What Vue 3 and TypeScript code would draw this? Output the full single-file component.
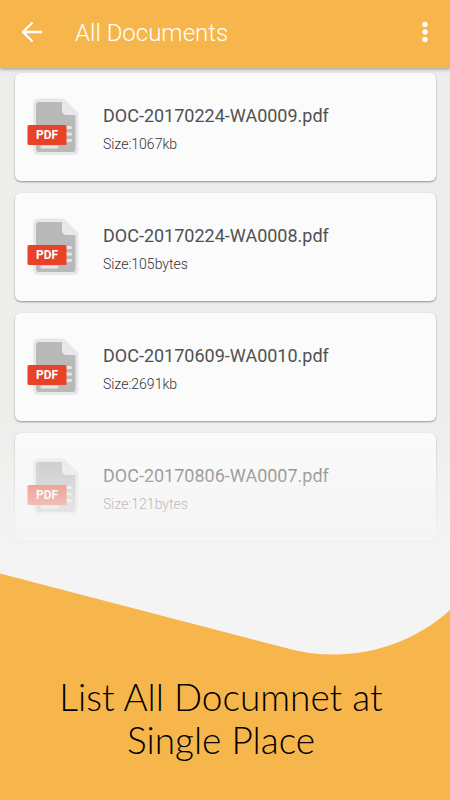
<script setup lang="ts">
interface DocumentItem {
  name: string
  size: string
}

const documents: DocumentItem[] = [
  { name: 'DOC-20170224-WA0009.pdf', size: '1067kb' },
  { name: 'DOC-20170224-WA0008.pdf', size: '105bytes' },
  { name: 'DOC-20170609-WA0010.pdf', size: '2691kb' },
  { name: 'DOC-20170806-WA0007.pdf', size: '121bytes' },
]
</script>

<template>
  <div class="screen">
    <header class="bar">
      <button class="icon-button" type="button" aria-label="Back">
        <svg width="24" height="24" viewBox="0 0 24 24" fill="none" stroke="#fff" stroke-width="2.300">
          <path d="M22 12H3.500M12.500 2.500 3 12l9.500 9.500" />
        </svg>
      </button>
      <h1 class="bar-title">All Documents</h1>
      <button class="icon-button" type="button" aria-label="More options">
        <svg width="24" height="24" viewBox="0 0 24 24" fill="#fff">
          <circle cx="12" cy="4.500" r="2.700" />
          <circle cx="12" cy="12" r="2.700" />
          <circle cx="12" cy="19.500" r="2.700" />
        </svg>
      </button>
    </header>

    <main class="content">
      <ul class="list">
        <li v-for="doc in documents" :key="doc.name" class="card">
          <span class="file">
            <svg width="54" height="60" viewBox="0 0 54 60">
              <path d="M13 1.500H36.500L51.500 16V52Q51.500 58 45.500 58H12.500Q6 58 6 52V8Q6 1.500 12.500 1.500Z" fill="#e8e8e8" />
              <path d="M12 5H35V13Q35 18 40 18H48.500V52Q48.500 55 45.500 55H12Q9 55 9 52V8Q9 5 12 5Z" fill="#b9b9b9" />
              <path d="M37 30.500H43.500M37 37H43.500M37 43.500H43.500M15 50H30" stroke="#e6e6e6" stroke-width="3" stroke-linecap="round" />
              <rect y="28" x="0.500" width="39" height="20" rx="1.500" fill="#e94327" />
            </svg>
            <span class="badge">PDF</span>
          </span>
          <div class="info">
            <h2 class="name">{{ doc.name }}</h2>
            <p class="size">Size:{{ doc.size }}</p>
          </div>
        </li>
      </ul>
      <div class="fade"></div>
    </main>

    <footer class="promo">
      <svg class="wave" viewBox="0 0 450 84" preserveAspectRatio="none" aria-hidden="true">
        <path d="M0 0.500 290 76Q310 81.500 334 81.500C375 81.500 417 67 450 37V84H0Z" fill="#f6b64b" />
      </svg>
      <p class="caption">List All Documnet at<br />Single Place</p>
    </footer>
  </div>
</template>

<style>
body {
  margin: 0;
  background: #f6b64b;
}
</style>

<style scoped>
.screen {
  display: flex;
  flex-direction: column;
  min-height: 100vh;
  background: #f4f4f4;
  font-family: Roboto, "Liberation Sans", sans-serif;
}

.bar {
  position: relative;
  z-index: 1;
  display: flex;
  align-items: center;
  height: 68px;
  padding: 0 12px 4px 20px;
  box-sizing: border-box;
  background: #f6b64b;
  box-shadow: 0 1px 4px rgba(0, 0, 0, 0.4);
}

.icon-button {
  display: flex;
  padding: 0 1px 0 0;
  border: 0;
  background: none;
  cursor: pointer;
}

.bar-title {
  flex: 1;
  margin: 0 0 0 30px;
  padding-top: 2px;
  color: #fff;
  font-size: 24px;
  font-weight: 300;
  line-height: 32px;
}

.content {
  position: relative;
  background: #ededeb;
}

.list {
  display: flex;
  flex-direction: column;
  gap: 12px;
  margin: 0;
  padding: 5px 14px 24px 15px;
  list-style: none;
}

.card {
  display: flex;
  align-items: center;
  gap: 22px;
  height: 108px;
  padding-left: 12px;
  box-sizing: border-box;
  border-radius: 6px;
  background: #fbfbfb;
  box-shadow: 0 1px 2px rgba(0, 0, 0, 0.4);
}

.file {
  display: grid;
  align-items: center;
}

.file > * {
  grid-area: 1 / 1;
}

.badge {
  width: 40px;
  padding-top: 16px;
  color: #fff;
  font-size: 12px;
  font-weight: 700;
  line-height: 16px;
  text-align: center;
}

.info {
  padding-top: 5px;
}

.name {
  margin: 0;
  color: #505050;
  font-size: 18px;
  font-weight: 400;
  line-height: 28px;
}

.size {
  margin: 0;
  color: #333;
  font-size: 14px;
  font-weight: 300;
  line-height: 28px;
}

.fade {
  position: absolute;
  right: 0;
  bottom: 0;
  left: 0;
  height: 152px;
  background: linear-gradient(rgba(244, 244, 244, 0), rgba(244, 244, 244, 0.6) 52%, rgba(244, 244, 244, 0.92) 82%, #f4f4f4);
  pointer-events: none;
}

.promo {
  display: flex;
  flex: 1;
  flex-direction: column;
  padding-top: 8px;
}

.wave {
  display: block;
  width: 100%;
  height: 84px;
}

.caption {
  flex: 1;
  margin: 0;
  padding: 18px 20px 18px 12px;
  background: #f6b64b;
  color: #000;
  font-family: Lato, "Liberation Sans", sans-serif;
  font-size: 37px;
  font-weight: 300;
  line-height: 43px;
  text-align: center;
}
</style>
